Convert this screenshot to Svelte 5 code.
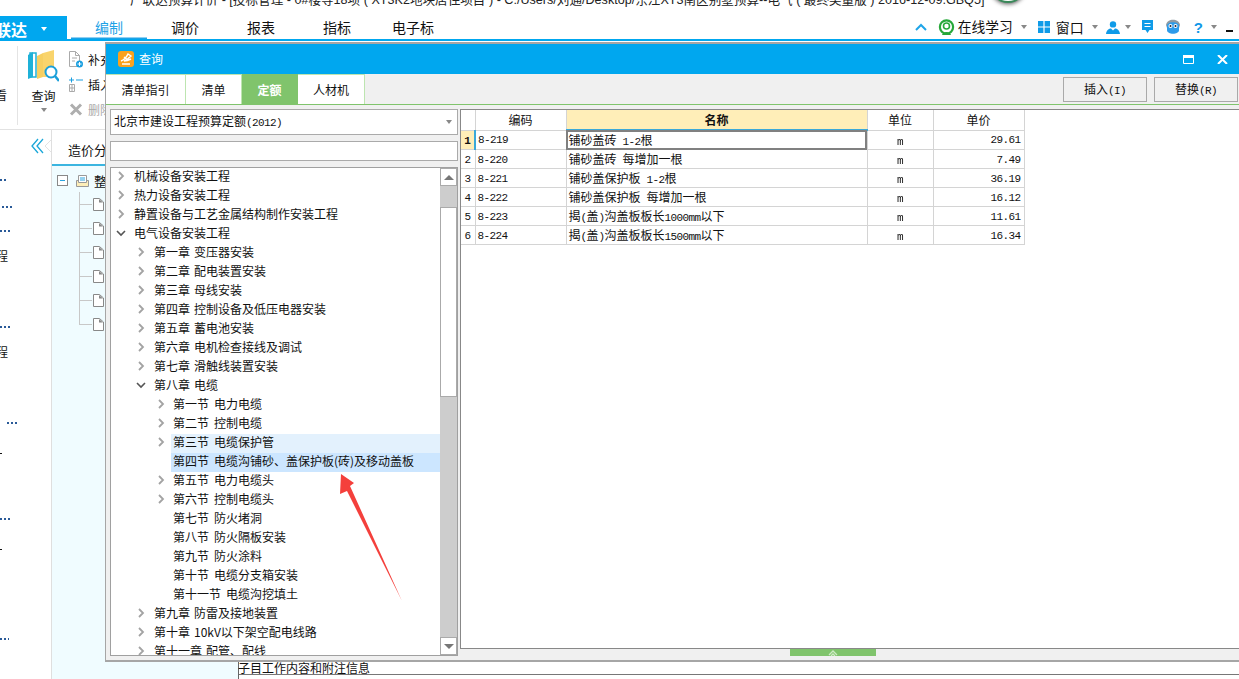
<script>
  const split = (s) => s.split(/([\x20-\x7e]+)/).filter(Boolean).map((t) => ({ t, latin: /^[\x20-\x7e]+$/.test(t) }));

  const tree = [
    [0, 'c', '机械设备安装工程'], [0, 'c', '热力设备安装工程'], [0, 'c', '静置设备与工艺金属结构制作安装工程'], [0, 'o', '电气设备安装工程'],
    [1, 'c', '第一章 变压器安装'], [1, 'c', '第二章 配电装置安装'], [1, 'c', '第三章 母线安装'], [1, 'c', '第四章 控制设备及低压电器安装'],
    [1, 'c', '第五章 蓄电池安装'], [1, 'c', '第六章 电机检查接线及调试'], [1, 'c', '第七章 滑触线装置安装'], [1, 'o', '第八章 电缆'],
    [2, 'c', '第一节 电力电缆'], [2, 'c', '第二节 控制电缆'], [2, 'c', '第三节 电缆保护管', 'hover'], [2, 'n', '第四节 电缆沟铺砂、盖保护板(砖)及移动盖板', 'sel'],
    [2, 'c', '第五节 电力电缆头'], [2, 'c', '第六节 控制电缆头'], [2, 'n', '第七节 防火堵洞'], [2, 'n', '第八节 防火隔板安装'],
    [2, 'n', '第九节 防火涂料'], [2, 'n', '第十节 电缆分支箱安装'], [2, 'n', '第十一节 电缆沟挖填土'],
    [1, 'c', '第九章 防雷及接地装置'], [1, 'c', '第十章 10kV以下架空配电线路'], [1, 'c', '第十一章 配管、配线']
  ];

  const rows = [
    ['8-219', '铺砂盖砖 1-2根', '29.61'], ['8-220', '铺砂盖砖 每增加一根', '7.49'], ['8-221', '铺砂盖保护板 1-2根', '36.19'],
    ['8-222', '铺砂盖保护板 每增加一根', '16.12'], ['8-223', '揭(盖)沟盖板板长1000mm以下', '11.61'], ['8-224', '揭(盖)沟盖板板长1500mm以下', '16.34']
  ];

  const marks = [
    { k: 'dots', y: 49, x: 0, w: 6 }, { k: 'dots', y: 25, x: 2, w: 10 }, { k: 'dots', y: 22, x: 0, w: 10 },
    { k: 'ch', y: 18, x: -4 }, { k: 'dots', y: 64, x: 0, w: 10 }, { k: 'ch', y: 18, x: -4 },
    { k: 'dots', y: 64, x: 7, w: 10 }, { k: 'tick', y: 29, x: 0 }, { k: 'dots', y: 64, x: 0, w: 11 },
    { k: 'tick', y: 29, x: 0 }, { k: 'dots', y: 88, x: 0, w: 9 }
  ];

  const menus = ['调价', '报表', '指标', '电子标'];
  const dlgTabs = ['清单指引', '清单', '定额', '人材机'];
</script>

<div class="root">
  <div class="circle"></div>
  <div class="title"><span>广联达预算计价 - [投标管理 - 0#楼等18项 ( XT3K2地块居住项目 ) - C:/Users/刘通/Desktop/东汪XT3南区别墅预算--电气 ( 最终奖量版 ) 2016-12-09.GBQ5]</span></div>

  <div class="menubar">
    <div class="brand"><span>联达</span><i class="caret white"></i></div>
    <div class="menu active">编制</div>
    {#each menus as m}<div class="menu">{m}</div>{/each}
    <div class="tools">
      <svg class="t-up" width="12" height="8" viewBox="0 0 12 8"><path d="M1 7l5-5 5 5" fill="none" stroke="#1fa5e8" stroke-width="2"/></svg>
      <svg class="t-head" width="17" height="17" viewBox="0 0 17 17"><circle cx="8.5" cy="8" r="6.6" fill="none" stroke="#27a83a" stroke-width="2.2"/><circle cx="8.5" cy="7" r="3" fill="none" stroke="#27a83a" stroke-width="1.6"/><path d="M4 16c1-4 8-4 9 0z" fill="#27a83a"/></svg>
      <span class="t-text">在线学习</span><i class="caret m1"></i>
      <svg class="t-win" width="12" height="12" viewBox="0 0 12 12"><path fill="#0f9be8" d="M0 0h5.4v5.4H0zM6.6 0H12v5.4H6.6zM0 6.6h5.4V12H0zM6.6 6.6H12V12H6.6z"/></svg>
      <span class="t-text t2">窗口</span><i class="caret m2"></i>
      <svg class="t-user" width="14" height="13" viewBox="0 0 14 13"><circle cx="7" cy="3.4" r="3.2" fill="#0f9be8"/><path d="M0 13c.5-4 3-5.5 5-5.5l2 2 2-2c2 0 4.500 1.500 5 5.500z" fill="#0f9be8"/></svg>
      <i class="caret m3"></i>
      <svg class="t-msg" width="11" height="14" viewBox="0 0 11 14"><path fill="#0f9be8" d="M0 0h11v10H7.500L5.500 13 3.500 10H0z"/><path d="M2.500 3.500h6M2.500 6.500h6" stroke="#fff"/></svg>
      <svg class="t-owl" width="16" height="17" viewBox="0 0 16 17"><path fill="#8f9aa3" d="M1 6c1-7 13-7 14 0l-1 3H2z"/><path fill="#2d9bea" d="M2 7c0-5 12-5 12 0v4c0 5-12 5-12 0z"/><circle cx="5.500" cy="7" r="2" fill="#fff"/><circle cx="10.500" cy="7" r="2" fill="#fff"/><circle cx="5.500" cy="7" r="1" fill="#223"/><circle cx="10.500" cy="7" r="1" fill="#223"/></svg>
      <span class="t-help">?</span><i class="caret m4"></i>
      <span class="t-min"></span>
    </div>
  </div>

  <div class="ribbon">
    <span class="look">看</span>
    <div class="rdiv"></div>
    <div class="bigbtn">
      <svg width="31" height="33" viewBox="0 0 31 33">
        <path d="M0 5l5-3 0 25-5 2z" fill="#1fb1d8"/><path d="M2 3h6v24H2z" fill="none" stroke="#1fb1d8" stroke-width="1.500"/>
        <path d="M9 6l6-3v24l-6 2z" fill="#f6cf62"/><path d="M15 3l11-3v21l-8 6h-3z" fill="#f9d46c"/>
        <circle cx="23" cy="22" r="5.500" fill="#fff" stroke="#1a9fd9" stroke-width="2"/><path d="M27 26l4 5" stroke="#1a9fd9" stroke-width="2.500"/>
      </svg>
      <span>查询</span><i class="caret"></i>
    </div>
    <div class="rcol">
      <div class="ritem"><svg width="14" height="17" viewBox="0 0 14 17"><path d="M.5.500h6l4 4v11H.5z" fill="#fff" stroke="#aaa"/><path d="M6.500.500v4h4M3 7h5M3 10h3" fill="none" stroke="#aaa"/><circle cx="10.500" cy="13" r="3.500" fill="#1a9fe0"/><path d="M8.500 13h4M10.500 11v4" stroke="#fff"/></svg><span>补充</span></div>
      <div class="ritem"><svg width="14" height="15" viewBox="0 0 14 15"><path d="M.5 7.500h5v7h-5zM.5 11h5M3 7.500v7" fill="none" stroke="#aaa"/><path d="M0 3h5M2.500.500v5M7 3h7" stroke="#1a9fe0"/></svg><span>插入</span></div>
      <div class="ritem gray"><svg width="13" height="13" viewBox="0 0 13 13"><path d="M1.500 1.500l10 10M11.500 1.500l-10 10" stroke="#aeaeae" stroke-width="3"/></svg><span>删除</span></div>
    </div>
  </div>

  <div class="work">
    <div class="side">
      {#each marks as m}
        {#if m.k === 'dots'}<div class="dots" style="margin-top:{m.y}px;margin-left:{m.x}px;width:{m.w}px"></div>
        {:else if m.k === 'ch'}<div class="ch" style="margin-top:{m.y}px;margin-left:{m.x}px">程</div>
        {:else}<div class="tick" style="margin-top:{m.y}px"></div>{/if}
      {/each}
      <svg class="collapse" width="20" height="16" viewBox="0 0 20 16"><path d="M7 1L1 8l6 7M12 1L6 8l6 7" fill="none" stroke="#1aa7d8" stroke-width="1.300"/><path d="M20 2l-6 6 6 6" fill="#fff" stroke="#e2e2e2"/></svg>
    </div>
    <div class="pane">
      <div class="panetab">造价分析</div>
      <div class="panetree">
        <div class="proot">
          <span class="minus"></span>
          <svg width="13" height="12" viewBox="0 0 13 12"><path d="M.5 5.500h12v6H.5z" fill="#fdeeb8" stroke="#999"/><path d="M2.500.500h8v7h-8z" fill="#fff" stroke="#999"/><path d="M4 3h5M4 5h5" stroke="#2aa5e0"/></svg>
          <span class="ptext">整</span>
        </div>
        <div class="files">
          {#each [0, 1, 2, 3, 4, 5] as f}
            <div class="file"><svg width="11" height="13" viewBox="0 0 11 13"><path d="M.5.500h6l4 3.500v8.500H.5z" fill="#fff" stroke="#888"/><path d="M6 1v3.500h4z" fill="#888"/></svg></div>
          {/each}
        </div>
      </div>
    </div>
    <div class="main">
      <div class="infobar"><span>子目工作内容和附注信息</span></div>
    </div>
  </div>

  <div class="dialog">
    <div class="dhead">
      <svg width="16" height="16" viewBox="0 0 16 16"><rect width="16" height="16" rx="3" fill="#f9a21e"/><path d="M3 10c3-1 6-5 7-7l3 2c-2 2-4 4-7 5 2 0 5-1 7-2M6 6l4 3M4 13h8" fill="none" stroke="#fff" stroke-width="1.500"/></svg>
      <span>查询</span>
      <svg class="dmax" width="11" height="9" viewBox="0 0 11 9"><path d="M.5.500h10v8H.5z" fill="none" stroke="#fff"/><path d="M0 0h11v3H0z" fill="#fff"/></svg>
      <svg class="dclose" width="11" height="9" viewBox="0 0 11 9"><path d="M1 0l9 9M10 0l-9 9" stroke="#fff" stroke-width="2"/></svg>
    </div>
    <div class="dtabs">
      {#each dlgTabs as t}<div class="dtab" class:on={t === '定额'}>{t}</div>{/each}
      <div class="dbtns">
        <div class="btn"><div>插入<span class="l">(I)</span></div></div>
        <div class="btn"><div>替换<span class="l">(R)</span></div></div>
      </div>
    </div>
    <div class="dbody">
      <div class="dleft">
        <div class="combo"><div>北京市建设工程预算定额<span class="l">(2012)</span></div><i class="caret"></i></div>
        <div class="search"></div>
        <div class="treebox">
          <div class="rows">
            {#each tree as r}
              <div class="trow lv{r[0]} {r[3] ?? ''}">
                {#if r[1] === 'c'}<svg class="chev" width="8" height="10" viewBox="0 0 8 10"><path d="M2 1l4 4-4 4" fill="none" stroke="#a3a3a3" stroke-width="1.800"/></svg>
                {:else if r[1] === 'o'}<svg class="chev open" width="10" height="8" viewBox="0 0 10 8"><path d="M1 2l4 4 4-4" fill="none" stroke="#555" stroke-width="1.600"/></svg>
                {/if}
                <span class="tlabel">{r[2]}</span>
              </div>
            {/each}
          </div>
          <div class="sbar">
            <div class="sbtn"><i class="tri up"></i></div>
            <div class="strack s1"></div>
            <div class="sthumb"></div>
            <div class="strack s2"></div>
            <div class="sbtn"><i class="tri down"></i></div>
          </div>
        </div>
      </div>
      <div class="dright">
        <div class="grid">
          <table>
            <colgroup><col class="c0" /><col class="c1" /><col class="c2" /><col class="c3" /><col class="c4" /></colgroup>
            <thead><tr><th></th><th>编码</th><th class="hl">名称</th><th>单位</th><th>单价</th></tr></thead>
            <tbody>
              {#each rows as r, i}
                <tr>
                  <td class="rh" class:cur={i === 0}>{i + 1}</td>
                  <td class="code l">{r[0]}</td>
                  <td class="name" class:act={i === 0}>{#each split(r[1]) as p}{#if p.latin}<span class="l">{p.t}</span>{:else}{p.t}{/if}{/each}</td>
                  <td class="unit"><span class="l gs">m</span></td>
                  <td class="price l">{r[2]}</td>
                </tr>
              {/each}
            </tbody>
          </table>
        </div>
        <div class="splitter">
          <div class="grip"><svg width="12" height="7" viewBox="0 0 12 7"><path d="M2 6l4-4 4 4M4 7l2-2 2 2" fill="none" stroke="#cfeac6" stroke-width="1.300"/></svg></div>
        </div>
      </div>
    </div>
  </div>

  <svg class="arrow" width="70" height="135" viewBox="0 0 70 135"><polygon points="5,0 18,9 14,12 66,127 11,17 4,20" fill="#f4403c"/></svg>
</div>

<style>
  :global(body) { margin: 0; }
  .root {
    position: relative; width: 1239px; height: 679px; overflow: hidden; background: #fff; color: #111;
    display: flex; flex-direction: column;
    font: 12px/1 "Noto Sans CJK SC", "Liberation Sans", sans-serif;
  }
  .l { font-family: "Liberation Mono", monospace; font-size: 11px; letter-spacing: -.6px; }
  i { display: block; }
  .caret { width: 0; height: 0; border: 3.5px solid transparent; border-top: 4px solid #888; border-bottom: 0; flex: none; }
  .caret.white { border-top-color: #fff; border-top-width: 4px; }

  .circle { position: absolute; left: 990px; top: -33px; width: 36px; height: 36px; border-radius: 50%; background: #fff; box-shadow: 0 1px 4px #555; border-bottom: 2px solid #3a8a5a; box-sizing: border-box; }
  .title { height: 16px; flex: none; overflow: hidden; padding-left: 130px; white-space: nowrap; font: 12.600px/20px "Liberation Sans", "Noto Sans CJK SC", sans-serif; color: #222; }
  .title span { display: block; margin-top: -10px; }

  .menubar { height: 25px; flex: none; box-sizing: border-box; border-bottom: 2px solid #00a7ef; display: flex; align-items: stretch; font-size: 14px; }
  .brand { width: 67px; margin-bottom: -2px; background: #00a7ef; color: #fff; display: flex; align-items: center; font-weight: 700; font-size: 16px; overflow: hidden; flex: none; }
  .brand span { margin-left: -5px; width: 34px; flex: none; }
  .brand .caret { margin-left: 12px; }
  .menu { width: 76px; text-align: center; line-height: 22px; flex: none; }
  .menu:last-of-type { width: 90px; }
  .menu.active { color: #1ea2e6; margin-left: 4px; box-shadow: inset 0 -1.500px #1ea2e6; }
  .tools { margin-left: auto; display: flex; align-items: center; padding-bottom: 1px; }
  .t-up { margin-right: 11px; flex: none; }
  .t-head { margin-right: 3px; flex: none; }
  .t-text { margin-right: 8.500px; font-size: 13.750px; white-space: nowrap; flex: none; }
  .m1 { margin-right: 10.500px; }
  .t-win { margin-right: 6px; flex: none; }
  .t-text.t2 { margin-right: 8px; font-size: 14px; }
  .m2 { margin-right: 8px; }
  .t-user { margin-right: 5px; flex: none; }
  .m3 { margin-right: 11px; }
  .t-msg { margin-right: 12px; flex: none; }
  .t-owl { margin-right: 13px; flex: none; }
  .t-help { color: #1098e8; font: 700 15px "Liberation Sans", sans-serif; margin-right: 8px; }
  .m4 { margin-right: 9px; }
  .t-min { width: 7px; height: 2px; background: #111; margin: 8px 6px 0 0; flex: none; }

  .ribbon { height: 89px; flex: none; box-sizing: border-box; border-bottom: 1px solid #e2e2e2; display: flex; position: relative; }
  .look { margin: 48px 0 0 -5px; width: 12px; font-size: 12px; flex: none; }
  .rdiv { width: 1px; background: #e4e4e4; margin: 5px 0 4px 10px; flex: none; }
  .bigbtn { width: 31px; margin: 9px 0 0 10px; display: flex; flex-direction: column; align-items: center; flex: none; }
  .bigbtn span { margin-top: 7px; }
  .bigbtn .caret { margin-top: 6px; }
  .rcol { margin: 10px 0 0 10px; display: flex; flex-direction: column; gap: 8px; }
  .ritem { height: 17px; display: flex; align-items: center; gap: 5px; white-space: nowrap; }
  .ritem svg { width: 14px; flex: none; }
  .ritem.gray { color: #aaa; }

  .work { flex: 1; display: flex; min-height: 0; }
  .side { width: 52px; box-sizing: border-box; border-right: 1px solid #dfdfdf; flex: none; overflow: hidden; position: relative; }
  .dots { height: 2px; background: repeating-linear-gradient(90deg, #2a5a98 0 2px, transparent 2px 4px); }
  .ch { font-size: 12px; line-height: 12px; }
  .tick { width: 2px; height: 1px; background: #111; }
  .collapse { position: absolute; left: 31px; top: 8px; }
  .pane { width: 186px; flex: none; display: flex; flex-direction: column; background: #f0fcff; }
  .panetab { height: 36px; box-sizing: border-box; background: #fff; border-bottom: 2px solid #3bb5e0; padding: 13px 0 0 16px; font-size: 13px; white-space: nowrap; }
  .proot { display: flex; align-items: center; height: 13px; margin-top: 8px; padding-left: 5px; }
  .minus { width: 9px; height: 9px; border: 1px solid #888; background: linear-gradient(#2aa5e0, #2aa5e0) center/5px 1px no-repeat #fff; box-sizing: content-box; }
  .proot svg { margin-left: 8px; }
  .ptext { font-size: 13px; margin-left: 5px; }
  .files { margin: 5px 0 0 27px; height: 144px; flex: none; display: flex; flex-direction: column; }
  .file { height: 24px; flex: none; display: flex; align-items: center; padding-left: 14px; background: linear-gradient(#c8c8c8, #c8c8c8) 0 50%/13px 1px no-repeat, linear-gradient(#c8c8c8, #c8c8c8) 0 0/1px 100% no-repeat; }
  .file:last-child { background: linear-gradient(#c8c8c8, #c8c8c8) 0 50%/13px 1px no-repeat, linear-gradient(#c8c8c8, #c8c8c8) 0 0/1px 50% no-repeat; }
  .main { flex: 1; display: flex; flex-direction: column; justify-content: flex-end; border-left: 1px solid #666; background: #fff; }
  .infobar { height: 13px; line-height: 13px; border-bottom: 1px solid #777; font-size: 12px; margin-bottom: 4px; }
  .infobar span { display: block; margin-left: -1px; }

  .dialog {
    position: absolute; left: 105px; top: 42px; width: 1134px; height: 620px; box-sizing: border-box;
    border: solid #a6a6a6; border-width: 2px 0 2px 1px; background: #f0f0f0; display: flex; flex-direction: column;
  }
  .dhead { height: 30px; flex: none; background: #00a7ef; color: #fff; display: flex; align-items: center; padding-left: 12px; gap: 5px; font-size: 12px; }
  .dmax { margin-left: auto; margin-right: 18px; }
  .dclose { margin-right: 11px; }
  .dtabs { height: 31px; flex: none; box-sizing: border-box; border-bottom: 1px solid #80c46c; display: flex; position: relative; }
  .dtab { background: #fff; border: solid #bde5b0; border-width: 1px 1px 0 0; box-sizing: border-box; line-height: 30px; text-align: center; width: 56px; }
  .dtab:first-child { width: 80px; }
  .dtab:nth-child(4) { width: 67px; }
  .dtab.on { background: #80c46c; color: #fff; font-weight: 700; border-color: #80c46c; }
  .dbtns { margin-left: auto; display: flex; gap: 7px; padding: 3px 1px 0 0; }
  .btn { width: 84px; height: 25px; box-sizing: border-box; border: 1px solid #a9a9a9; display: flex; align-items: center; justify-content: center; }

  .dbody { flex: 1; display: flex; min-height: 0; }
  .dleft { width: 348px; margin: 4px 0 4px 4px; flex: none; display: flex; flex-direction: column; }
  .combo { height: 26px; box-sizing: border-box; background: #fff; border: 1px solid #aaa; display: flex; align-items: center; padding-left: 3px; }
  .combo .caret { margin-left: auto; margin-right: 5px; }
  .search { height: 20px; margin-top: 6px; box-sizing: border-box; background: #fff; border: 1px solid #aaa; }
  .treebox { flex: 1; min-height: 0; margin-top: 6px; box-sizing: border-box; background: #fff; border: 1px solid #a0a0a0; display: flex; }
  .rows { flex: 1; overflow: hidden; min-width: 0; }
  .trow { height: 19px; box-sizing: border-box; padding-bottom: 3px; display: flex; align-items: center; white-space: nowrap; position: relative; }
  .lv0 { margin-left: 23px; }
  .lv1 { margin-left: 43px; }
  .lv2 { margin-left: 60px; padding-left: 2px; }
  .chev { position: absolute; left: -17px; }
  .chev.open { left: -18px; }
  .lv2 .chev { left: -14px; }
  .tlabel { word-spacing: 1.300px; }
  .lv2 .tlabel { word-spacing: 2.300px; }
  .hover { background: #e3f1fd; }
  .sel { background: #cce6ff; }
  .sbar { width: 17px; flex: none; background: #cdcdcd; display: flex; flex-direction: column; }
  .sbtn { height: 18px; flex: none; box-sizing: border-box; background: #fff; border: 1px solid #aaa; display: flex; align-items: center; justify-content: center; }
  .tri { width: 0; height: 0; border: 5px solid transparent; }
  .tri.up { border-bottom: 5px solid #777; border-top: 0; }
  .tri.down { border-top: 5px solid #777; border-bottom: 0; }
  .s1 { height: 21px; flex: none; }
  .sthumb { height: 190px; flex: none; box-sizing: border-box; background: #fff; border: 1px solid #aaa; }
  .s2 { flex: 1; }

  .dright { flex: 1; min-width: 0; margin-left: 2px; display: flex; flex-direction: column; padding-top: 4px; }
  .grid { flex: 1; min-height: 0; background: #fff; border: solid #888; border-width: 1px 0 1px 1px; box-sizing: border-box; }
  table { border-collapse: collapse; table-layout: fixed; width: 563px; }
  .c0 { width: 14px; } .c1 { width: 91px; } .c2 { width: 301px; } .c3 { width: 66px; } .c4 { width: 91px; }
  th, td { border: 1px solid #d4d4d4; padding: 2px 0 0; height: 16px; box-sizing: content-box; white-space: nowrap; overflow: hidden; }
  th { font-weight: 400; height: 19px; padding: 0; border-top: 0; }
  th:first-child, td:first-child { border-left: 0; }
  th.hl { background: #ffeeb8; font-weight: 700; border-bottom: 2px solid #3ba9d9; }
  .rh { font: 11px "Liberation Mono", monospace; text-align: center; }
  .rh.cur { background: #ffeeb8; font-weight: 700; border-right: 2px solid #3ba9d9; }
  .code { padding-left: 2px; }
  .name { padding-left: 2px; }
  .name.act { outline: 2px solid #808080; outline-offset: -2px; }
  .unit { text-align: center; }
  .gs { display: inline-block; will-change: transform; }
  .price { text-align: right; padding-right: 3px; }
  .splitter { height: 11px; flex: none; display: flex; }
  .grip { width: 86px; height: 7px; margin-left: 330px; background: #80c46c; display: flex; justify-content: center; }

  .arrow { position: absolute; left: 336px; top: 474px; }
</style>
